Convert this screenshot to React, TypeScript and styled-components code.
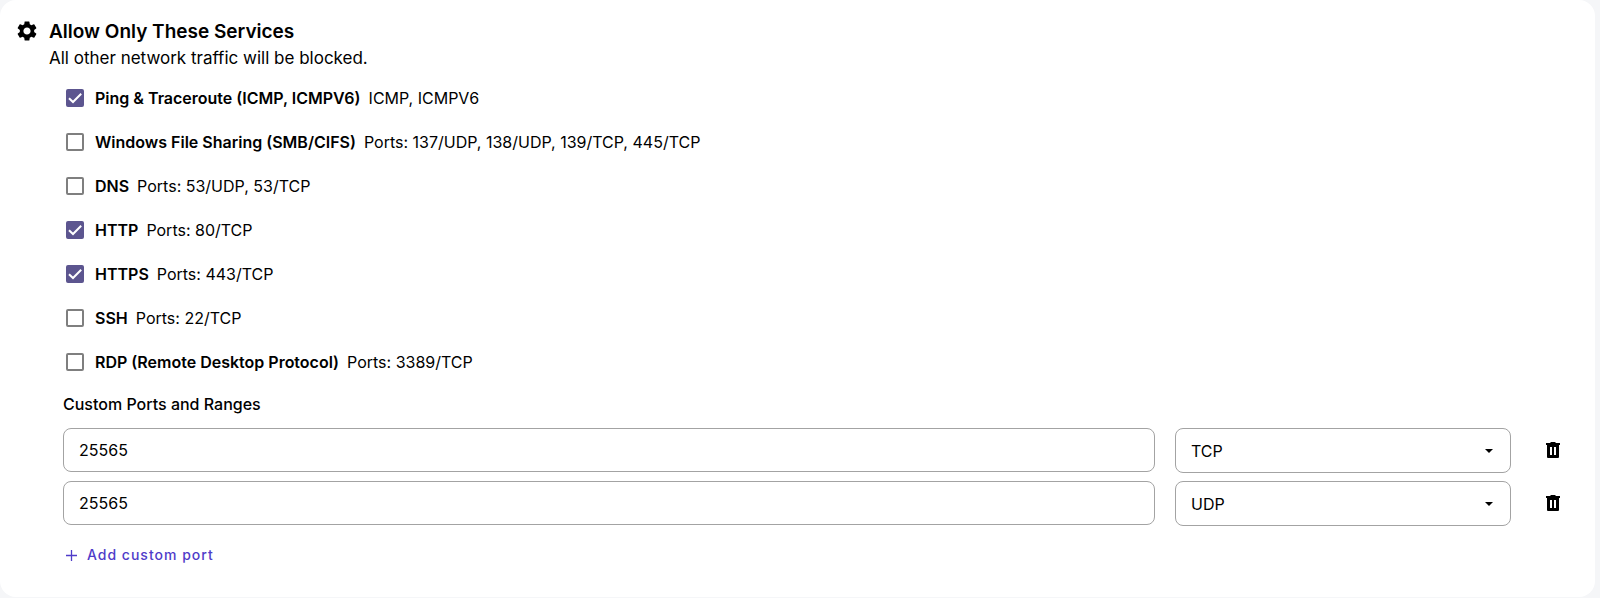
import React, { useState } from "react";
import styled, { createGlobalStyle } from "styled-components";
import { MdSettings } from "react-icons/md";

const GlobalStyle = createGlobalStyle`
  *, *::before, *::after { box-sizing: border-box; }
  body {
    margin: 0;
    background: #f5f6f8;
    color: #000;
    font: 400 16px/24px Inter, "Liberation Sans", sans-serif;
  }
  input, select, button { font: inherit; color: inherit; }
`;

const Card = styled.section`
  margin-right: 5px;
  padding: 19px 16px 24px 15px;
  background: #fff;
  border-radius: 16px;
`;

const Header = styled.header`
  display: flex;
  gap: 10px;
`;

const GearIcon = styled(MdSettings)`
  flex: none;
  width: 24px;
  height: 24px;
`;

const Title = styled.h2`
  margin: 0;
  font-size: 19px;
  font-weight: 600;
  line-height: 26px;
`;

const Subtitle = styled.p`
  margin: 0;
  font-size: 17px;
  line-height: 26px;
`;

const Content = styled.div`
  padding: 0 4px 0 48px;
`;

const ServiceList = styled.ul`
  margin: 5px 0 0;
  padding: 0 0 0 3px;
  list-style: none;
`;

const Service = styled.li`
  display: flex;
  align-items: center;
  height: 44px;
`;

const ServiceLabel = styled.label`
  display: flex;
  align-items: center;
  gap: 8px;
  cursor: pointer;
`;

const CheckHolder = styled.span`
  display: grid;
  width: 18px;
  height: 18px;
  margin-right: 3px;

  > * { grid-area: 1 / 1; }
`;

const Checkbox = styled.input`
  appearance: none;
  width: 18px;
  height: 18px;
  margin: 0;
  border: 2px solid #7f7f7f;
  border-radius: 2px;
  background: #fff;

  &:checked {
    border-color: #5c558f;
    background: #5c558f;
  }
  &:not(:checked) + svg { visibility: hidden; }
`;

const CheckMark = styled.svg`
  width: 18px;
  height: 18px;
  pointer-events: none;
`;

const ServiceName = styled.span`
  font-weight: 600;
`;

const PortsTitle = styled.h3`
  margin: 8px 0 12px;
  font-size: 16px;
  font-weight: 500;
  line-height: 24px;
`;

const PortRows = styled.div`
  display: grid;
  gap: 8px;
`;

const PortRow = styled.div`
  display: grid;
  grid-template-columns: 13fr 4fr 44px;
  column-gap: 20px;
  align-items: start;
`;

const PortInput = styled.input`
  width: 100%;
  height: 44px;
  padding: 0 15px;
  border: 1px solid #a3a3a3;
  border-radius: 8px;
  background: #fff;
`;

const SelectHolder = styled.div`
  display: grid;
  align-items: center;

  > * { grid-area: 1 / 1; }
`;

const ProtocolSelect = styled.select`
  appearance: none;
  width: 100%;
  height: 45px;
  padding: 0 15px;
  border: 1px solid #a3a3a3;
  border-radius: 8px;
  background: #fff;
`;

const Arrow = styled.svg`
  justify-self: end;
  width: 8px;
  height: 4px;
  margin-right: 18px;
  pointer-events: none;
`;

const DeleteButton = styled.button`
  display: flex;
  align-items: center;
  justify-content: center;
  width: 44px;
  height: 44px;
  padding: 0;
  border: 0;
  background: none;
  cursor: pointer;
`;

const AddButton = styled.button`
  display: flex;
  align-items: center;
  gap: 10px;
  margin-top: 11px;
  padding: 6px 3px;
  border: 0;
  background: none;
  color: #4f3cc9;
  font-size: 14px;
  font-weight: 500;
  letter-spacing: 1px;
  cursor: pointer;
`;

const services = [
  { name: "Ping & Traceroute (ICMP, ICMPV6)", detail: "ICMP, ICMPV6", on: true },
  { name: "Windows File Sharing (SMB/CIFS)", detail: "Ports: 137/UDP, 138/UDP, 139/TCP, 445/TCP", on: false },
  { name: "DNS", detail: "Ports: 53/UDP, 53/TCP", on: false },
  { name: "HTTP", detail: "Ports: 80/TCP", on: true },
  { name: "HTTPS", detail: "Ports: 443/TCP", on: true },
  { name: "SSH", detail: "Ports: 22/TCP", on: false },
  { name: "RDP (Remote Desktop Protocol)", detail: "Ports: 3389/TCP", on: false },
];

const TrashIcon = () => (
  <svg width="14" height="16" viewBox="0 0 14 16" aria-hidden="true">
    <path
      fillRule="evenodd"
      d="M4 1l1-1h4l1 1h4v2h-1v12a1 1 0 0 1-1 1H2a1 1 0 0 1-1-1V3H0V1zM4 5v8h2V5zM8 5v8h2V5z"
    />
  </svg>
);

export default function App() {
  const [ports, setPorts] = useState([
    { id: 1, port: "25565", protocol: "TCP" },
    { id: 2, port: "25565", protocol: "UDP" },
  ]);

  const update = (id: number, change: { port?: string; protocol?: string }) =>
    setPorts(ports.map((p) => (p.id === id ? { ...p, ...change } : p)));

  return (
    <>
      <GlobalStyle />
      <Card>
        <Header>
          <GearIcon aria-hidden="true" />
          <div>
            <Title>Allow Only These Services</Title>
            <Subtitle>All other network traffic will be blocked.</Subtitle>
          </div>
        </Header>
        <Content>
          <ServiceList>
            {services.map((s) => (
              <Service key={s.name}>
                <ServiceLabel>
                  <CheckHolder>
                    <Checkbox type="checkbox" defaultChecked={s.on} />
                    <CheckMark viewBox="0 0 18 18" aria-hidden="true">
                      <path d="M3 9.2L7 13L15.2 4.8" fill="none" stroke="#fff" strokeWidth="2" />
                    </CheckMark>
                  </CheckHolder>
                  <ServiceName>{s.name}</ServiceName>
                  <span>{s.detail}</span>
                </ServiceLabel>
              </Service>
            ))}
          </ServiceList>
          <PortsTitle>Custom Ports and Ranges</PortsTitle>
          <PortRows>
            {ports.map((p) => (
              <PortRow key={p.id}>
                <PortInput
                  type="text"
                  aria-label="Port or range"
                  value={p.port}
                  onChange={(e) => update(p.id, { port: e.target.value })}
                />
                <SelectHolder>
                  <ProtocolSelect
                    aria-label="Protocol"
                    value={p.protocol}
                    onChange={(e) => update(p.id, { protocol: e.target.value })}
                  >
                    <option>TCP</option>
                    <option>UDP</option>
                  </ProtocolSelect>
                  <Arrow viewBox="0 0 8 4" aria-hidden="true">
                    <path d="M0 0h8L4 4z" />
                  </Arrow>
                </SelectHolder>
                <DeleteButton
                  type="button"
                  aria-label="Delete port"
                  onClick={() => setPorts(ports.filter((x) => x.id !== p.id))}
                >
                  <TrashIcon />
                </DeleteButton>
              </PortRow>
            ))}
          </PortRows>
          <AddButton
            type="button"
            onClick={() => setPorts([...ports, { id: Date.now(), port: "", protocol: "TCP" }])}
          >
            <svg width="11" height="11" viewBox="0 0 11 11" aria-hidden="true">
              <path d="M5.5 0v11M0 5.5h11" stroke="currentColor" strokeWidth="1.3" />
            </svg>
            Add custom port
          </AddButton>
        </Content>
      </Card>
    </>
  );
}
